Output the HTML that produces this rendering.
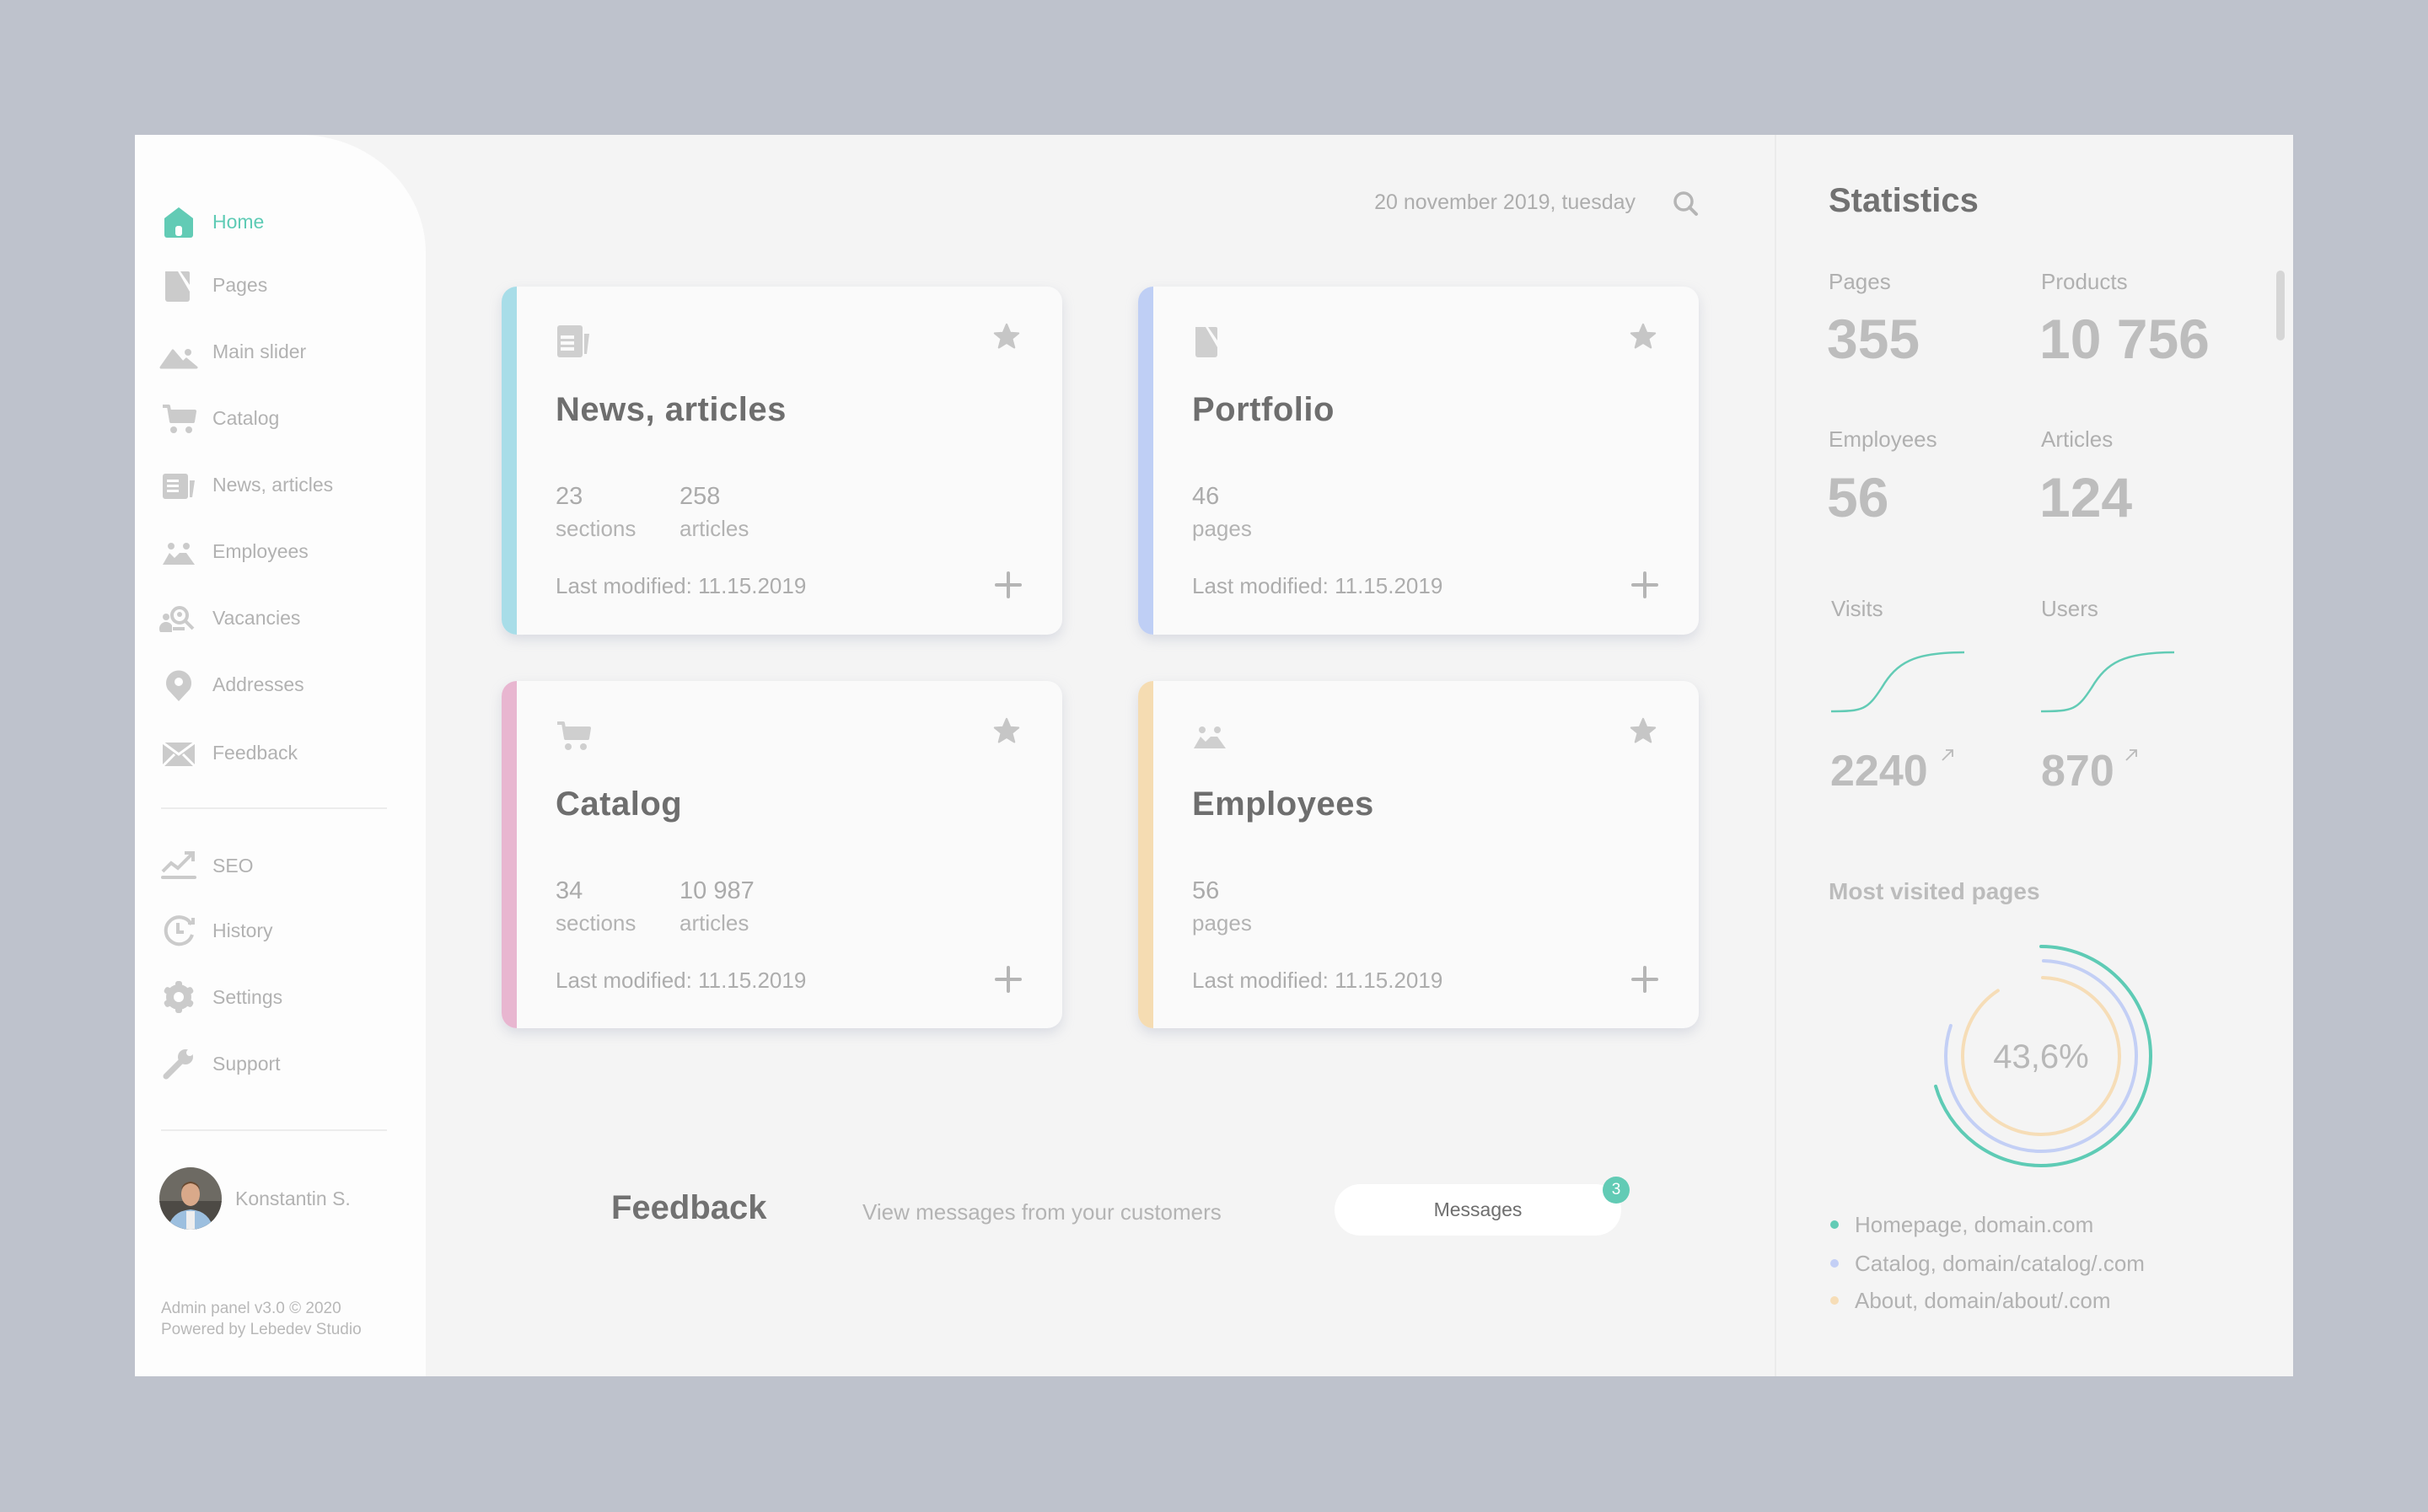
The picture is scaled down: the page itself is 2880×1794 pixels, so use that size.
<!DOCTYPE html>
<html><head><meta charset="utf-8">
<style>
*{margin:0;padding:0;box-sizing:border-box}
body{width:2880px;height:1794px;background:#bec2cc;font-family:"Liberation Sans",sans-serif;position:relative;overflow:hidden}
.abs{position:absolute}
#panel{left:160px;top:160px;width:2560px;height:1473px;background:#f4f4f4}
#side{left:160px;top:160px;width:345px;height:1473px;background:#fdfdfd;border-top-right-radius:150px 140px}
.nav{position:absolute;left:252px;font-size:23px;color:#b2b2b2;line-height:30px;height:30px}
.ic{position:absolute;left:191px;width:42px;height:42px}
.card{position:absolute;width:665px;height:413px;background:#fafafa;border-radius:18px;box-shadow:0 6px 14px rgba(170,175,195,.35);overflow:hidden}
.card .bar{position:absolute;left:0;top:0;bottom:0;width:18px}
.card .t{position:absolute;left:64px;top:124px;font-size:40px;color:#6e6e6e;font-weight:bold;letter-spacing:.5px}
.card .n{position:absolute;top:233px;font-size:29px;color:#ababab}
.card .l{position:absolute;top:272px;font-size:26px;color:#b3b3b3}
.card .m{position:absolute;left:64px;top:340px;font-size:26px;color:#adadad}
.card .star{position:absolute;left:582px;top:42px}
.card .plus{position:absolute;left:584px;top:337px}
.card .ci{position:absolute;left:64px;top:44px}
.sl{position:absolute;font-size:26px;color:#b0b0b0}
.sv{position:absolute;font-size:66px;font-weight:bold;color:#bdbdbd}
.lg{position:absolute;left:2200px;font-size:26px;color:#b2b2b2}
.dot{position:absolute;left:2171px;width:10px;height:10px;border-radius:5px}
</style></head><body>
<div id="panel" class="abs"></div>
<div class="abs" style="left:2105px;top:160px;width:2px;height:1473px;background:#ebebeb"></div>
<div class="abs" style="left:2700px;top:321px;width:10px;height:83px;border-radius:5px;background:#d6d6d6"></div>
<div id="side" class="abs"></div>

<svg class="ic" style="top:242px" viewBox="0 0 42 42"><path d="M4 17 L21 4 L38 17 V37 a3 3 0 0 1 -3 3 H7 a3 3 0 0 1 -3 -3Z" fill="#62cbb5"/><rect x="17" y="26" width="8" height="12" rx="3" fill="#fff"/></svg>
<div class="nav" style="top:248px;color:#5ecbb5">Home</div>
<svg class="ic" style="top:318px" viewBox="0 0 42 42"><path d="M5 4 H20 L34 28 V37 a3 3 0 0 1 -3 3 H8 a3 3 0 0 1 -3 -3Z" fill="#cbcbcb"/><path d="M23 4 L32 4 a2 2 0 0 1 2 2 V20Z" fill="#cbcbcb"/></svg>
<div class="nav" style="top:323px">Pages</div>
<svg class="ic" style="top:398px;width:46px;left:189px" viewBox="0 0 46 42"><path d="M2 38 L16 18 L28 32 L32 28 L44 38Z" fill="#cbcbcb" stroke="#cbcbcb" stroke-width="3" stroke-linejoin="round"/><circle cx="34" cy="20" r="4" fill="#cbcbcb"/></svg>
<div class="nav" style="top:402px">Main slider</div>
<svg class="ic" style="top:476px" viewBox="0 0 42 42"><path d="M2 6 H9 L12 24 H38 L40 12 H10" fill="none" stroke="#cbcbcb" stroke-width="4" stroke-linejoin="round"/><path d="M10 12 H40 L38 24 H12Z" fill="#cbcbcb"/><circle cx="15" cy="34" r="4" fill="#cbcbcb"/><circle cx="33" cy="34" r="4" fill="#cbcbcb"/></svg>
<div class="nav" style="top:481px">Catalog</div>
<svg class="ic" style="top:556px" viewBox="0 0 42 42"><rect x="2" y="6" width="30" height="30" rx="3" fill="#cbcbcb"/><rect x="7" y="13" width="14" height="3" fill="#fff"/><rect x="7" y="19" width="14" height="3" fill="#fff"/><rect x="7" y="25" width="14" height="3" fill="#fff"/><path d="M34 14 H40 L37 34 H34Z" fill="#cbcbcb"/></svg>
<div class="nav" style="top:560px">News, articles</div>
<svg class="ic" style="top:636px" viewBox="0 0 42 42"><circle cx="12" cy="12" r="4" fill="#cbcbcb"/><circle cx="30" cy="12" r="4" fill="#cbcbcb"/><path d="M2 34 L10 20 L16 26 L22 20 L30 20 L40 34Z" fill="#cbcbcb"/></svg>
<div class="nav" style="top:639px">Employees</div>
<svg class="ic" style="top:714px;width:46px;left:189px" viewBox="0 0 46 42"><circle cx="8" cy="18" r="4" fill="#cbcbcb"/><path d="M1 36 a8 8 0 0 1 14 -8 V36Z" fill="#cbcbcb"/><circle cx="24" cy="16" r="9" fill="none" stroke="#cbcbcb" stroke-width="4"/><circle cx="24" cy="15" r="3" fill="#cbcbcb"/><path d="M31 23 L40 32" stroke="#cbcbcb" stroke-width="4"/><path d="M16 32 H30" stroke="#cbcbcb" stroke-width="4"/></svg>
<div class="nav" style="top:718px">Vacancies</div>
<svg class="ic" style="top:792px" viewBox="0 0 42 42"><path d="M21 40 L8 26 A15 15 0 1 1 34 26Z" fill="#cbcbcb"/><circle cx="21" cy="17" r="5" fill="#fff"/></svg>
<div class="nav" style="top:797px">Addresses</div>
<svg class="ic" style="top:873px" viewBox="0 0 42 42"><path d="M2 8 H40 V36 H2Z" fill="#cbcbcb"/><path d="M2 8 L21 22 L40 8 M2 36 L16 22 M40 36 L26 22" stroke="#fff" stroke-width="3" fill="none"/></svg>
<div class="nav" style="top:878px">Feedback</div>
<div class="abs" style="left:191px;top:958px;width:268px;height:2px;background:#ececec"></div>
<svg class="ic" style="top:1006px" viewBox="0 0 42 42"><path d="M2 28 L12 18 L20 24 L36 8" fill="none" stroke="#cbcbcb" stroke-width="4"/><path d="M28 6 H38 V16" fill="none" stroke="#cbcbcb" stroke-width="4"/><rect x="0" y="33" width="42" height="4" rx="2" fill="#cbcbcb"/></svg>
<div class="nav" style="top:1012px">SEO</div>
<svg class="ic" style="top:1083px" viewBox="0 0 42 42"><path d="M36 14 A16 16 0 1 0 37 26" fill="none" stroke="#cbcbcb" stroke-width="4"/><path d="M32 12 L38 12 L38 6" fill="none" stroke="#cbcbcb" stroke-width="4"/><path d="M20 12 V23 H27" fill="none" stroke="#cbcbcb" stroke-width="4"/></svg>
<div class="nav" style="top:1089px">History</div>
<svg class="ic" style="top:1162px" viewBox="0 0 42 42"><g fill="#cbcbcb"><circle cx="21" cy="21" r="15"/><rect x="17" y="2" width="8" height="38" rx="3"/><rect x="17" y="2" width="8" height="38" rx="3" transform="rotate(60 21 21)"/><rect x="17" y="2" width="8" height="38" rx="3" transform="rotate(120 21 21)"/></g><circle cx="21" cy="21" r="6" fill="#fff"/></svg>
<div class="nav" style="top:1168px">Settings</div>
<svg class="ic" style="top:1241px" viewBox="0 0 42 42"><path d="M6 36 L24 18" stroke="#cbcbcb" stroke-width="7" stroke-linecap="round"/><circle cx="29" cy="13" r="9" fill="#cbcbcb"/><circle cx="34" cy="8" r="4" fill="#fdfdfd"/></svg>
<div class="nav" style="top:1247px">Support</div>
<div class="abs" style="left:191px;top:1340px;width:268px;height:2px;background:#ececec"></div>
<svg class="abs" style="left:189px;top:1385px" width="74" height="74" viewBox="0 0 74 74"><defs><clipPath id="av"><circle cx="37" cy="37" r="37"/></clipPath></defs><g clip-path="url(#av)"><rect width="74" height="74" fill="#6d6a63"/><rect y="40" width="74" height="34" fill="#4d4a45"/><path d="M10 74 Q14 52 37 50 Q60 52 64 74Z" fill="#9cbfdf"/><rect x="32" y="52" width="10" height="22" fill="#eee"/><ellipse cx="37" cy="32" rx="11" ry="14" fill="#d9a98a"/><path d="M26 26 Q37 12 48 26 Q46 18 37 17 Q28 18 26 26Z" fill="#6b4a30"/></g></svg>
<div class="nav" style="left:279px;top:1407px">Konstantin S.</div>
<div class="abs" style="left:191px;top:1540px;font-size:19px;color:#b8b8b8;line-height:25px">Admin panel v3.0 © 2020<br>Powered by Lebedev Studio</div>

<div class="abs" style="left:1560px;top:226px;width:380px;text-align:right;font-size:25px;color:#adadad">20 november 2019, tuesday</div>
<svg class="abs" style="left:1983px;top:225px" width="34" height="34" viewBox="0 0 34 34"><circle cx="14" cy="14" r="10" fill="none" stroke="#b5b5b5" stroke-width="3.5"/><path d="M21 21 L29 29" stroke="#b5b5b5" stroke-width="4" stroke-linecap="round"/></svg>

<div class="card" style="left:595px;top:340px"><div class="bar" style="background:#a8dde8"></div>
<svg class="ci" width="42" height="42" viewBox="0 0 42 42"><rect x="2" y="2" width="30" height="38" rx="3" fill="#cfcfcf"/><rect x="6" y="14" width="16" height="4" fill="#fafafa"/><rect x="6" y="21" width="16" height="4" fill="#fafafa"/><rect x="6" y="28" width="16" height="4" fill="#fafafa"/><path d="M34 12 H40 L37 36 H34Z" fill="#cfcfcf"/></svg>
<div class="t">News, articles</div>
<div class="n" style="left:64px">23</div><div class="l" style="left:64px">sections</div>
<div class="n" style="left:211px">258</div><div class="l" style="left:211px">articles</div>
<div class="m">Last modified: 11.15.2019</div>
<svg class="star" width="34" height="34" viewBox="0 0 24 24"><path d="M12 2 L15 9 L22 9.5 L16.5 14 L18.5 21.5 L12 17.5 L5.5 21.5 L7.5 14 L2 9.5 L9 9Z" fill="#c6c6c6" stroke="#c6c6c6" stroke-linejoin="round" stroke-width="1.5"/></svg>
<svg class="plus" width="34" height="34" viewBox="0 0 34 34"><path d="M17 3 V31 M3 17 H31" stroke="#b5b5b5" stroke-width="4" stroke-linecap="round"/></svg>
</div>

<div class="card" style="left:1350px;top:340px"><div class="bar" style="background:#bfcff5"></div>
<svg class="ci" width="42" height="42" viewBox="0 0 42 42"><path d="M4 4 H16 L30 28 V37 a3 3 0 0 1 -3 3 H7 a3 3 0 0 1 -3 -3Z" fill="#cfcfcf"/><path d="M19 4 L28 4 a2 2 0 0 1 2 2 V20Z" fill="#cfcfcf"/></svg>
<div class="t">Portfolio</div>
<div class="n" style="left:64px">46</div><div class="l" style="left:64px">pages</div>
<div class="m">Last modified: 11.15.2019</div>
<svg class="star" width="34" height="34" viewBox="0 0 24 24"><path d="M12 2 L15 9 L22 9.5 L16.5 14 L18.5 21.5 L12 17.5 L5.5 21.5 L7.5 14 L2 9.5 L9 9Z" fill="#c6c6c6" stroke="#c6c6c6" stroke-linejoin="round" stroke-width="1.5"/></svg>
<svg class="plus" width="34" height="34" viewBox="0 0 34 34"><path d="M17 3 V31 M3 17 H31" stroke="#b5b5b5" stroke-width="4" stroke-linecap="round"/></svg>
</div>

<div class="card" style="left:595px;top:808px;height:412px"><div class="bar" style="background:#e8b6d0"></div>
<svg class="ci" width="42" height="42" viewBox="0 0 42 42"><path d="M2 6 H9 L12 24 H38 L40 12 H10" fill="none" stroke="#cfcfcf" stroke-width="4" stroke-linejoin="round"/><path d="M10 12 H40 L38 24 H12Z" fill="#cfcfcf"/><circle cx="15" cy="34" r="4" fill="#cfcfcf"/><circle cx="33" cy="34" r="4" fill="#cfcfcf"/></svg>
<div class="t">Catalog</div>
<div class="n" style="left:64px">34</div><div class="l" style="left:64px">sections</div>
<div class="n" style="left:211px">10 987</div><div class="l" style="left:211px">articles</div>
<div class="m">Last modified: 11.15.2019</div>
<svg class="star" width="34" height="34" viewBox="0 0 24 24"><path d="M12 2 L15 9 L22 9.5 L16.5 14 L18.5 21.5 L12 17.5 L5.5 21.5 L7.5 14 L2 9.5 L9 9Z" fill="#c6c6c6" stroke="#c6c6c6" stroke-linejoin="round" stroke-width="1.5"/></svg>
<svg class="plus" width="34" height="34" viewBox="0 0 34 34"><path d="M17 3 V31 M3 17 H31" stroke="#b5b5b5" stroke-width="4" stroke-linecap="round"/></svg>
</div>

<div class="card" style="left:1350px;top:808px;height:412px"><div class="bar" style="background:#f5dcb2"></div>
<svg class="ci" width="42" height="42" viewBox="0 0 42 42"><circle cx="12" cy="14" r="4" fill="#cfcfcf"/><circle cx="30" cy="14" r="4" fill="#cfcfcf"/><path d="M2 36 L10 22 L16 28 L22 22 L30 22 L40 36Z" fill="#cfcfcf"/></svg>
<div class="t">Employees</div>
<div class="n" style="left:64px">56</div><div class="l" style="left:64px">pages</div>
<div class="m">Last modified: 11.15.2019</div>
<svg class="star" width="34" height="34" viewBox="0 0 24 24"><path d="M12 2 L15 9 L22 9.5 L16.5 14 L18.5 21.5 L12 17.5 L5.5 21.5 L7.5 14 L2 9.5 L9 9Z" fill="#c6c6c6" stroke="#c6c6c6" stroke-linejoin="round" stroke-width="1.5"/></svg>
<svg class="plus" width="34" height="34" viewBox="0 0 34 34"><path d="M17 3 V31 M3 17 H31" stroke="#b5b5b5" stroke-width="4" stroke-linecap="round"/></svg>
</div>

<div class="abs" style="left:725px;top:1411px;font-size:40px;font-weight:bold;color:#717171">Feedback</div>
<div class="abs" style="left:1023px;top:1423px;font-size:26px;color:#b4b4b4">View messages from your customers</div>
<div class="abs" style="left:1583px;top:1405px;width:340px;height:61px;border-radius:31px;background:#fff;text-align:center;line-height:61px;font-size:23px;color:#6e6e6e">Messages</div>
<div class="abs" style="left:1901px;top:1396px;width:32px;height:32px;border-radius:16px;background:#62cbb5;color:#fff;font-size:19px;text-align:center;line-height:32px">3</div>

<div class="abs" style="left:2169px;top:216px;font-size:40px;font-weight:bold;color:#717171">Statistics</div>
<div class="sl" style="left:2169px;top:319px">Pages</div>
<div class="sl" style="left:2421px;top:319px">Products</div>
<div class="sv" style="left:2167px;top:364px">355</div>
<div class="sv" style="left:2419px;top:364px">10 756</div>
<div class="sl" style="left:2169px;top:506px">Employees</div>
<div class="sl" style="left:2421px;top:506px">Articles</div>
<div class="sv" style="left:2167px;top:552px">56</div>
<div class="sv" style="left:2419px;top:552px">124</div>
<div class="sl" style="left:2172px;top:707px">Visits</div>
<div class="sl" style="left:2421px;top:707px">Users</div>
<svg class="abs" style="left:2160px;top:760px" width="450" height="100" viewBox="0 0 450 100"><path d="M12 84 C50 84 55 82 72 56 C90 26 110 14 170 14" fill="none" stroke="#62cbb5" stroke-width="2.5"/><path d="M261 84 C299 84 304 82 321 56 C339 26 359 14 419 14" fill="none" stroke="#62cbb5" stroke-width="2.5"/></svg>
<div class="abs" style="left:2171px;top:885px;font-size:52px;font-weight:bold;color:#bdbdbd">2240</div>
<div class="abs" style="left:2421px;top:885px;font-size:52px;font-weight:bold;color:#bdbdbd">870</div>
<svg class="abs" style="left:2302px;top:888px" width="16" height="16" viewBox="0 0 16 16"><path d="M2 14 L14 2 M6 2 H14 V10" fill="none" stroke="#bbb" stroke-width="1.8"/></svg>
<svg class="abs" style="left:2520px;top:888px" width="16" height="16" viewBox="0 0 16 16"><path d="M2 14 L14 2 M6 2 H14 V10" fill="none" stroke="#bbb" stroke-width="1.8"/></svg>
<div class="abs" style="left:2169px;top:1042px;font-size:28px;font-weight:bold;color:#bcbcbc">Most visited pages</div>
<svg class="abs" style="left:2271px;top:1103px" width="300" height="300" viewBox="0 0 300 300">
<g transform="rotate(-90 150 150)" fill="none" stroke-linecap="round">
<circle cx="150" cy="150" r="130" stroke="#5ecbb5" stroke-width="4" stroke-dasharray="576 1000"/>
<circle cx="150" cy="150" r="113" stroke="#c3cff5" stroke-width="4" stroke-dasharray="566 1000" stroke-dashoffset="-3"/>
<circle cx="150" cy="150" r="93" stroke="#f6ddb7" stroke-width="4" stroke-dasharray="528 1000" stroke-dashoffset="-2"/>
</g>
<text x="150" y="164" text-anchor="middle" font-family="Liberation Sans, sans-serif" font-size="40" fill="#b8b8b8">43,6%</text>
</svg>
<div class="dot" style="top:1448px;background:#62cbb5"></div><div class="lg" style="top:1438px">Homepage, domain.com</div>
<div class="dot" style="top:1494px;background:#c3cff5"></div><div class="lg" style="top:1484px">Catalog, domain/catalog/.com</div>
<div class="dot" style="top:1538px;background:#f6ddb7"></div><div class="lg" style="top:1528px">About, domain/about/.com</div>
</body></html>
